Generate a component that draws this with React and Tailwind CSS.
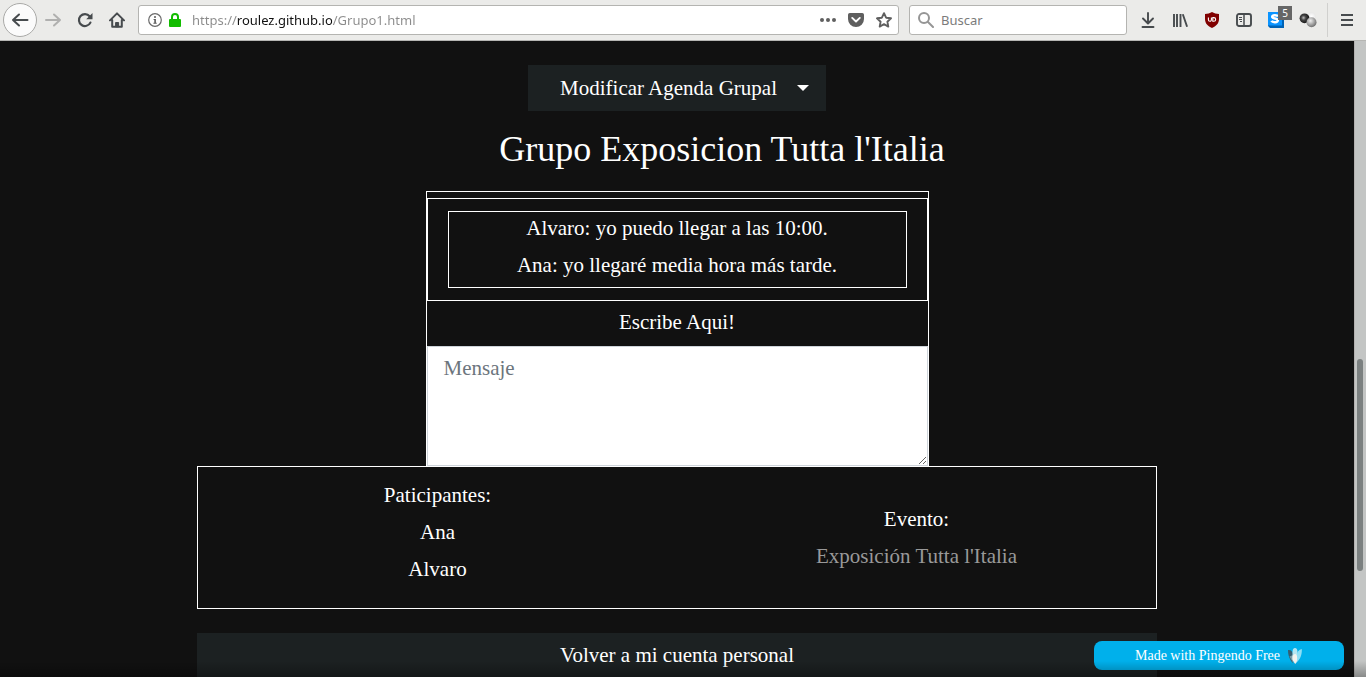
import React from "react";

const barButton = "flex h-8 w-8 shrink-0 items-center justify-center";

function BackIcon() {
  return (
    <svg width="18" height="18" viewBox="0 0 18 18" fill="none" stroke="#474b4e" strokeWidth="2" strokeLinecap="round" strokeLinejoin="round">
      <path d="M16.500 9H2M8 3.500L2 9l6 5.500" />
    </svg>
  );
}

function ForwardIcon() {
  return (
    <svg width="18" height="18" viewBox="0 0 18 18" fill="none" stroke="#b0b0af" strokeWidth="2" strokeLinecap="round" strokeLinejoin="round">
      <path d="M2 9h14M10 3.500l6 5.500-6 5.500" />
    </svg>
  );
}

function ReloadIcon() {
  return (
    <svg width="16" height="16" viewBox="0 0 16 16">
      <path d="M12.600 4.200A6 6 0 1 0 13.400 10.600" fill="none" stroke="#474b4e" strokeWidth="2.200" strokeLinecap="round" />
      <path d="M15.500 1v6.200H9.200z" fill="#474b4e" />
    </svg>
  );
}

function HomeIcon() {
  return (
    <svg width="16" height="16" viewBox="0 0 16 16" fill="none" stroke="#474b4e" strokeWidth="2" strokeLinecap="round" strokeLinejoin="round">
      <path d="M1 8.400L8 1.400l7 7M3.200 8v6.800h9.600V8" />
      <path d="M6.600 14.500v-4h3v4z" fill="#474b4e" strokeWidth="1" />
    </svg>
  );
}

function InfoIcon() {
  return (
    <svg width="14" height="14" viewBox="0 0 14 14">
      <circle cx="7" cy="7" r="6.300" fill="none" stroke="#6a6a6a" strokeWidth="1.200" />
      <circle cx="7" cy="4" r="1" fill="#5a5a5a" />
      <path d="M5.600 6h2.300v3.800h.8v.9H5.400v-.9h.9V6.900h-.7z" fill="#5a5a5a" />
    </svg>
  );
}

function LockIcon() {
  return (
    <svg width="12" height="14" viewBox="0 0 12 14">
      <path d="M3 7V4a3 3 0 0 1 6 0v3" fill="none" stroke="#12bc00" strokeWidth="2" />
      <rect x="0" y="6" width="12" height="8" rx="1" fill="#12bc00" />
    </svg>
  );
}

function DotsIcon() {
  return (
    <svg width="16" height="16" viewBox="0 0 16 16" fill="#5f5f5f">
      <circle cx="2" cy="8" r="2" />
      <circle cx="8" cy="8" r="2" />
      <circle cx="14" cy="8" r="2" />
    </svg>
  );
}

function PocketIcon() {
  return (
    <svg width="16" height="16" viewBox="0 0 16 16">
      <path d="M1.800 1h12.400A1.800 1.800 0 0 1 16 2.800V7A8 8 0 0 1 0 7V2.800A1.800 1.800 0 0 1 1.800 1z" fill="#5f5f5f" />
      <path d="M4.200 5.900L8 9.500l3.800-3.600" fill="none" stroke="#fff" strokeWidth="1.900" strokeLinecap="round" strokeLinejoin="round" />
    </svg>
  );
}

function StarIcon() {
  return (
    <svg width="16" height="16" viewBox="0 0 16 16" fill="none" stroke="#5f5f5f" strokeWidth="1.900" strokeLinejoin="round">
      <path d="M8 1.200l2.100 4.500 4.900.6-3.600 3.400.9 4.900L8 12.200l-4.300 2.400.9-4.900L1 6.300l4.900-.6z" />
    </svg>
  );
}

function SearchIcon() {
  return (
    <svg width="16" height="16" viewBox="0 0 16 16" fill="none" stroke="#959595" strokeWidth="2" strokeLinecap="round">
      <circle cx="6" cy="6" r="5" />
      <path d="M10 10l5 5" />
    </svg>
  );
}

function DownloadIcon() {
  return (
    <svg width="14" height="16" viewBox="0 0 14 16" fill="none" stroke="#474b4e" strokeWidth="1.900" strokeLinecap="round" strokeLinejoin="round">
      <path d="M7 1v10M2 6.500l5 5 5-5M1.500 15h11" />
    </svg>
  );
}

function LibraryIcon() {
  return (
    <svg width="16" height="14" viewBox="0 0 16 14" fill="none" stroke="#474b4e" strokeWidth="1.900">
      <path d="M2 1v13M5 1v13M8.500 1v13M10.800 1.300l4.300 12.400" />
    </svg>
  );
}

function ShieldIcon() {
  return (
    <svg width="14" height="16" viewBox="0 0 14 16">
      <path d="M7 0c2 1.300 4.500 2 7 2v5c0 4.500-3 7.300-7 9-4-1.700-7-4.500-7-9V2c2.500 0 5-.7 7-2z" fill="#800000" />
      <path d="M3.400 5.500v2.300a1.500 1.500 0 0 0 3 0V5.500M7.800 5.600v3.700h1a1.850 1.850 0 0 0 0-3.700z" fill="none" stroke="#fff" strokeWidth="1.100" />
    </svg>
  );
}

function SidebarIcon() {
  return (
    <svg width="16" height="14" viewBox="0 0 16 14" fill="none" stroke="#474b4e">
      <rect x="1" y="1" width="14" height="12" rx="2" strokeWidth="1.900" />
      <path d="M8 1v12" strokeWidth="1.500" />
      <path d="M3 4.500h3M3 6.500h3M4 8.500h2" strokeWidth="1" />
    </svg>
  );
}

function StylusIcon() {
  return (
    <svg width="16" height="16" viewBox="0 0 16 16">
      <path d="M0 0h14l2 3v13H2l-2-2z" fill="#0063b5" />
      <path d="M0 0h14v13.500H0z" fill="#0b94ff" />
      <path d="M10.200 4.300C9.400 2.900 4.200 2.500 4.200 4.800c0 2.200 5.600 1.200 5.600 3.500 0 2.500-5.200 2.300-6.400.6" fill="none" stroke="#fff" strokeWidth="2.500" />
    </svg>
  );
}

function BallsIcon() {
  return (
    <svg width="18" height="16" viewBox="0 0 18 16">
      <defs>
        <radialGradient id="ballDark" cx=".4" cy=".45" r=".6">
          <stop offset="0" stopColor="#bbb" />
          <stop offset=".4" stopColor="#444" />
          <stop offset="1" stopColor="#111" />
        </radialGradient>
        <radialGradient id="ballGrey" cx=".4" cy=".35" r=".7">
          <stop offset="0" stopColor="#eee" />
          <stop offset="1" stopColor="#666" />
        </radialGradient>
        <radialGradient id="ballLight" cx=".5" cy=".5" r=".6">
          <stop offset="0" stopColor="#fff" />
          <stop offset="1" stopColor="#e2e2e2" />
        </radialGradient>
      </defs>
      <circle cx="12.500" cy="4.500" r="4.300" fill="url(#ballLight)" />
      <circle cx="5.500" cy="6.300" r="4.900" fill="url(#ballDark)" />
      <circle cx="12.500" cy="10.300" r="5" fill="url(#ballGrey)" />
    </svg>
  );
}

function MenuIcon() {
  return (
    <svg width="12" height="12" viewBox="0 0 12 12" stroke="#474b4e" strokeWidth="2">
      <path d="M0 1h12M0 6h12M0 11h12" />
    </svg>
  );
}

function PingendoIcon() {
  return (
    <svg width="16" height="18" viewBox="0 0 16 18">
      <path d="M1 3c3-.5 4.500 1.500 5 4v9C3 13.500 1 9 1 3z" fill="#355e70" />
      <path d="M2.500 9.500L6 8v7.500z" fill="#7d9ca8" />
      <path d="M5.500 5c0-2.500 1-4 2.500-4s2.500 1.500 2.500 4v8h-5z" fill="#b5e6f2" />
      <path d="M14.800 2c-2.800.5-4.800 3-5 6l-.8 8c4-3 6.300-8.500 5.800-14z" fill="#8fdff5" />
      <path d="M5.500 9.500C6 8 7 7 8 7c1.500 0 2.200 2 2.200 4.500S9.300 16 8.300 17C6.500 15.500 5 12.500 5.500 9.500z" fill="#f3f3ef" />
    </svg>
  );
}

function Toolbar() {
  return (
    <header className="flex h-[41px] shrink-0 items-center border-b border-[#b6b6b3] bg-[#ebebe9] pl-[3px] font-['Noto_Sans',sans-serif] text-[13px]">
      <button aria-label="Atrás" className="flex h-[34px] w-[34px] shrink-0 items-center justify-center rounded-full border border-[#a9a9a7] bg-[#fbfbfb]"><BackIcon /></button>
      <button aria-label="Adelante" className={barButton}><ForwardIcon /></button>
      <button aria-label="Recargar" className={barButton}><ReloadIcon /></button>
      <button aria-label="Inicio" className={barButton}><HomeIcon /></button>
      <div className="ml-[5px] flex h-[30px] min-w-0 flex-1 items-center rounded-[3px] border border-[#b4b4b1] bg-white pr-1.5 pl-[9px]">
        <button aria-label="Información del sitio" className="mr-[7px]"><InfoIcon /></button>
        <button aria-label="Conexión segura" className="mr-[11px]"><LockIcon /></button>
        <input
          aria-label="Dirección"
          defaultValue="https://roulez.github.io/Grupo1.html"
          className="min-w-0 flex-1 bg-[linear-gradient(to_right,#8b8b8b_45px,#111_45px,#111_140px,#8b8b8b_140px)] bg-clip-text pt-0.5 text-transparent outline-none"
        />
        <div className="flex items-center gap-3">
          <button aria-label="Acciones de página"><DotsIcon /></button>
          <button aria-label="Guardar en Pocket"><PocketIcon /></button>
          <button aria-label="Marcador"><StarIcon /></button>
        </div>
      </div>
      <div className="ml-2.5 flex h-[30px] w-[218px] shrink-0 items-center gap-[7px] rounded-[3px] border border-[#b4b4b1] bg-white px-2">
        <SearchIcon />
        <input aria-label="Buscar" placeholder="Buscar" className="min-w-0 flex-1 pt-0.5 outline-none placeholder:text-[#7b7b7b]" />
      </div>
      <div className="ml-[5px] flex items-center">
        <button aria-label="Descargas" className={barButton}><DownloadIcon /></button>
        <button aria-label="Biblioteca" className={barButton}><LibraryIcon /></button>
        <button aria-label="Bloqueador" className={barButton}><ShieldIcon /></button>
        <button aria-label="Barra lateral" className={barButton}><SidebarIcon /></button>
        <button aria-label="Estilos" className={"relative " + barButton}>
          <StylusIcon />
          <span className="absolute top-0.5 right-0 flex h-3.5 w-3.5 items-center justify-center bg-[#666] text-[10px] leading-none text-white">5</span>
        </button>
        <button aria-label="Complemento" className={barButton}><BallsIcon /></button>
      </div>
      <button aria-label="Menú" className="ml-[3px] flex h-[34px] w-[39px] shrink-0 items-center justify-center border-l border-[#d0d0ce]"><MenuIcon /></button>
    </header>
  );
}

function ChatPanel() {
  return (
    <section className="w-[503px] max-w-full border border-b-0 border-white pt-1.5">
      <div className="border border-white px-5 py-3">
        <div className="border border-white pb-px">
          <p className="mb-[5px]">Alvaro: yo puedo llegar a las 10:00.</p>
          <p className="mb-[5px]">Ana: yo llegaré media hora más tarde.</p>
        </div>
      </div>
      <label htmlFor="mensaje" className="block pt-[5px] pb-2">Escribe Aqui!</label>
      <textarea
        id="mensaje"
        placeholder="Mensaje"
        className="block h-[120px] w-full resize border border-[#ced4da] bg-white px-4 py-[5px] text-[#495057] outline-none placeholder:text-[#6c757d]"
      />
    </section>
  );
}

export default function App() {
  return (
    <div className="flex h-screen flex-col overflow-hidden bg-[#111]">
      <Toolbar />
      <div className="relative flex min-h-0 flex-1">
        <main className="flex min-w-0 flex-1 flex-col items-center overflow-hidden pt-6 text-center font-['Liberation_Serif',serif] text-[21px] leading-8 text-white">
          <button className="flex h-[46px] w-[298px] shrink-0 items-center justify-end bg-[#1c2122] pr-[17px]">
            Modificar Agenda Grupal
            <svg className="ml-5" width="12" height="6" viewBox="0 0 12 6"><path d="M0 0h12L6 6z" fill="#fff" /></svg>
          </button>
          <h1 className="mt-4 mb-5 pl-[90px] text-[36px] leading-[44px]">Grupo Exposicion Tutta l'Italia</h1>
          <ChatPanel />
          <section className="grid w-[960px] max-w-full shrink-0 grid-cols-2 items-center border border-white pt-3 pb-[18px]">
            <div>
              <p className="mb-[5px]">Paticipantes:</p>
              <p className="mb-[5px]">Ana</p>
              <p className="mb-[5px]">Alvaro</p>
            </div>
            <div className="pt-2.5">
              <p className="mb-[5px]">Evento:</p>
              <p className="mb-[5px]"><a href="#evento" className="text-[#999]">Exposición Tutta l'Italia</a></p>
            </div>
          </section>
          <button className="mt-6 h-[46px] w-[960px] max-w-full shrink-0 bg-[#1c2122] pb-0.5">Volver a mi cuenta personal</button>
        </main>
        <div className="w-3 shrink-0 border-l border-[#b3b1b0] bg-[#c3c5c4] pt-[318px] pl-0.5">
          <div className="h-[212px] w-1.5 rounded-full bg-[#7b8080]" />
        </div>
        <a href="#pingendo" className="absolute right-[22px] bottom-[7px] flex h-[29px] w-[250px] items-center justify-center gap-[7px] rounded-lg bg-[#00b0eb] font-['Liberation_Serif',serif] text-[14px] text-white">
          Made with Pingendo Free
          <PingendoIcon />
        </a>
        <div className="pointer-events-none absolute inset-x-0 bottom-0 h-4 bg-linear-to-b from-transparent to-black/30" />
      </div>
    </div>
  );
}
